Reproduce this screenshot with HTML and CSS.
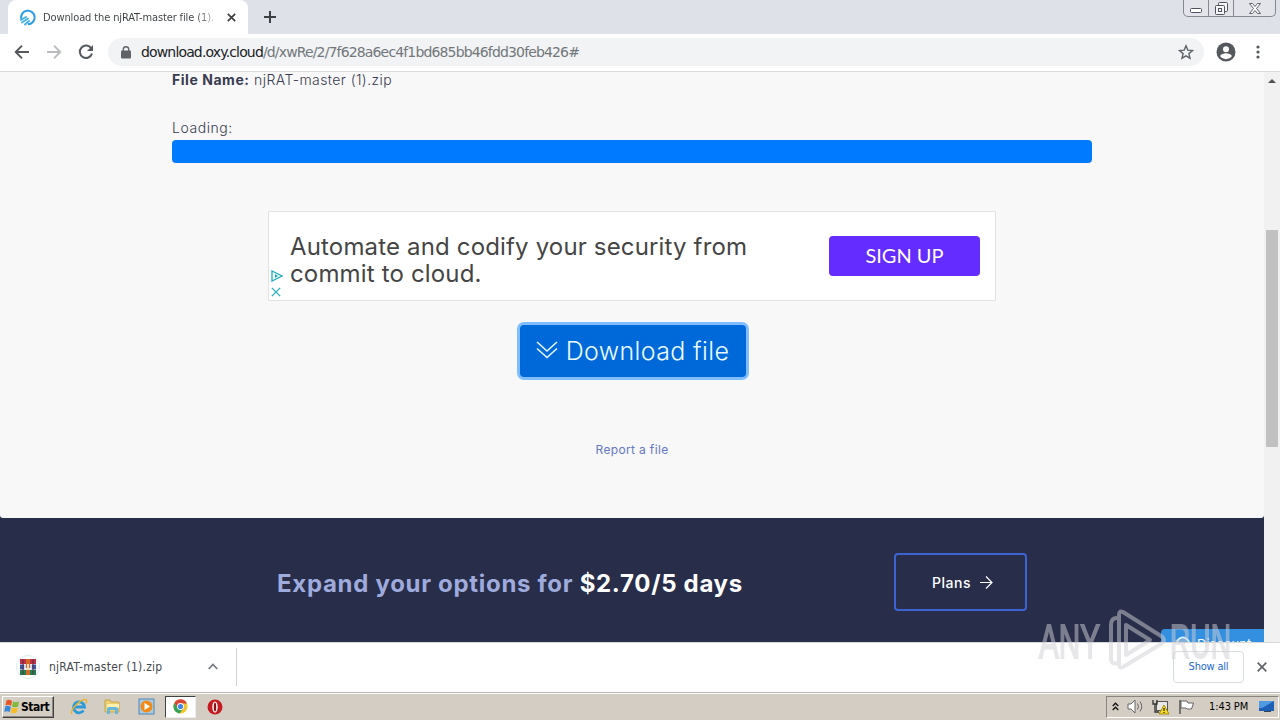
FILE: index.html
```html
<!DOCTYPE html>
<html lang="en">
<head>
  <meta charset="utf-8">
  <title>Download the njRAT-master file (1).zip</title>
  <link rel="stylesheet" href="styles.css">
</head>
<body>
  <div class="tab-strip">
    <div class="tab">
      <svg class="favicon" width="17" height="17" viewBox="0 0 17 17" fill="none">
        <path d="M2.200 10A6.800 6.800 0 1 1 9 15.300" stroke="#2f9de8" stroke-width="2"/>
        <path d="M2 11l5-3M3 13.500l6-4M6 15.500l4-3.500" stroke="#45b4ee" stroke-width="2" stroke-linecap="round"/>
      </svg>
      <span class="tab-title">Download the njRAT-master file (1).</span>
      <svg class="tab-close" width="9" height="9" viewBox="0 0 9 9"><path d="M.8.8l7.400 7.400M8.200.8L.8 8.200" stroke="#3c4043" stroke-width="1.700"/></svg>
    </div>
    <svg class="new-tab" width="12" height="12" viewBox="0 0 12 12"><path d="M6 0v12M0 6h12" stroke="#3c4043" stroke-width="2"/></svg>
    <div class="window-buttons">
      <span class="win-btn"><svg width="13" height="6" viewBox="0 0 13 6"><rect x=".5" y=".5" width="11" height="4" rx="1" fill="#fff" stroke="#51535c"/></svg></span>
      <span class="win-btn"><svg width="13" height="13" viewBox="0 0 13 13" fill="#f5f5f7" stroke="#51535c"><rect x="3.500" y=".5" width="9" height="9" rx="1"/><rect x=".5" y="3.500" width="9" height="9" rx="1"/><rect x="3.500" y="6.500" width="3" height="3"/></svg></span>
      <span class="win-btn wide"><svg width="12" height="11" viewBox="0 0 12 11"><path d="M.5.5h3L6 3.500 8.500.5h3l-4 5 4 5h-3L6 7.500 3.500 10.500h-3l4-5z" fill="#fff" stroke="#60626a"/></svg></span>
    </div>
  </div>

  <div class="toolbar">
    <svg class="nav-icon" width="16" height="16" viewBox="0 0 16 16"><path d="M15 8H2M8 1.700L1.700 8 8 14.300" fill="none" stroke="#55585c" stroke-width="1.900"/></svg>
    <svg class="nav-icon" width="16" height="16" viewBox="0 0 16 16"><path d="M1 8h13M8 1.700L14.300 8 8 14.300" fill="none" stroke="#b9bbbe" stroke-width="1.900"/></svg>
    <svg class="nav-icon" width="16" height="16" viewBox="0 0 16 16"><path d="M13.300 4.500A6.200 6.200 0 1 0 14 9.500" fill="none" stroke="#55585c" stroke-width="2"/><path d="M15 1v6H9z" fill="#55585c"/></svg>
    <div class="address">
      <svg width="10" height="13" viewBox="0 0 10 13"><rect y="4.500" width="10" height="8" rx="1" fill="#5f6368"/><path d="M2.300 5V3.500a2.700 2.700 0 0 1 5.400 0V5" fill="none" stroke="#5f6368" stroke-width="1.400"/></svg>
      <span class="url"><b>download.oxy.cloud</b>/d/xwRe/2/7f628a6ec4f1bd685bb46fdd30feb426#</span>
      <svg class="star" width="16" height="16" viewBox="0 0 16 16"><path d="M8 1.800l1.800 4.300 4.700.4-3.600 3.100 1.100 4.600L8 11.800l-4 2.400 1.100-4.600-3.600-3.100 4.700-.4z" fill="none" stroke="#5f6368" stroke-width="1.400"/></svg>
    </div>
    <svg class="profile" width="20" height="20" viewBox="0 0 20 20"><circle cx="10" cy="10" r="9.500" fill="#55585d"/><circle cx="10" cy="7.300" r="3" fill="#fff"/><path d="M4 14c1.200-2 3.500-2.800 6-2.800s4.800.8 6 2.800a7.300 7.300 0 0 1-12 0z" fill="#fff"/></svg>
    <svg class="menu-dots" width="4" height="14" viewBox="0 0 4 14" fill="#55585c"><circle cx="2" cy="2" r="1.600"/><circle cx="2" cy="7" r="1.600"/><circle cx="2" cy="12" r="1.600"/></svg>
  </div>

  <div class="viewport">
    <div class="page">
      <main class="content">
        <p class="file-name"><b>File Name:</b> <span>njRAT-master (1).zip</span></p>
        <p class="loading">Loading:</p>
        <div class="progress"></div>

        <div class="ad">
          <div class="ad-marks">
            <svg width="12" height="12" viewBox="0 0 12 12"><path d="M1 1l10 5-10 5z" fill="none" stroke="#1aaebc" stroke-width="1.300"/><path d="M4 4v4l3-2z" fill="#1aaebc"/></svg>
            <svg width="10" height="10" viewBox="0 0 10 10"><path d="M.8.8l8.400 8.400M9.200.8L.8 9.200" stroke="#1aaebc" stroke-width="1.200"/></svg>
          </div>
          <div class="ad-text">Automate and codify your security from<br>commit to cloud.</div>
          <button class="ad-btn">SIGN UP</button>
        </div>

        <button class="download-btn">
          <svg width="22" height="18" viewBox="0 0 22 18"><path d="M1 1l10 9L21 1M1 7.500l10 9 10-9" fill="none" stroke="#e8fbff" stroke-width="1.500"/></svg>
          <span>Download file</span>
        </button>
        <a class="report" href="#">Report a file</a>
      </main>

      <section class="plans">
        <h2>Expand your options for <span>$2.70/5 days</span></h2>
        <a class="plans-btn" href="#">Plans
          <svg width="13" height="13" viewBox="0 0 13 13"><path d="M0 6.500h12M6 .5l6 6-6 6" fill="none" stroke="#fff" stroke-width="1.200"/></svg>
        </a>
        <div class="chat"><svg width="17" height="14" viewBox="0 0 17 14"><path d="M2 14V8a6 6 0 0 1 12-1v7M5 9h7" fill="none" stroke="#d9efff" stroke-width="2"/></svg><span>Discount</span></div>
      </section>
    </div>
    <div class="scrollbar">
      <svg width="8" height="4" viewBox="0 0 8 4"><path d="M0 4l4-4 4 4z" fill="#505050"/></svg>
      <div class="thumb"></div>
    </div>
  </div>

  <div class="downloads">
    <div class="download-item">
      <svg class="zip-icon" width="24" height="24" viewBox="0 0 24 24">
        <circle cx="12" cy="12" r="11.500" fill="#fff" stroke="#dce8ee"/>
        <path d="M4 4h16v5H4z" fill="#c12e46"/><path d="M4 9.500h16v5H4z" fill="#4056a5"/><path d="M4 15h16v5H4z" fill="#22804c"/>
        <path d="M7 4v16M17 4v16" stroke="#563043"/><path d="M10 4h4v16h-4z" fill="#d06a25"/>
        <path d="M9 9v5h6V9M12 9v4" fill="none" stroke="#fff" stroke-width="1.500"/>
      </svg>
      <span class="item-name">njRAT-master (1).zip</span>
      <svg width="10" height="7" viewBox="0 0 10 7"><path d="M.7 6L5 1.500 9.300 6" fill="none" stroke="#777a7e" stroke-width="1.700"/></svg>
    </div>
    <button class="show-all">Show all</button>
    <svg class="shelf-close" width="10" height="10" viewBox="0 0 10 10"><path d="M.7.7l8.600 8.600M9.300.7L.7 9.300" stroke="#5f6368" stroke-width="1.700"/></svg>
  </div>

  <div class="taskbar">
    <div class="start">
      <svg width="16" height="15" viewBox="0 0 16 15"><path d="M2.500 1.500Q5 0 8 2L7 7Q4.500 5 1.500 6.500z" fill="#e65325"/><path d="M9 2.500q3 1.500 6 0l-1 5q-3 1.500-6 0z" fill="#7eb83c"/><path d="M1.300 7.500Q4 6 6.800 8l-1 5Q3 11.500.3 13z" fill="#3689d8"/><path d="M7.800 8.500q3 1.500 6 0l-1 5q-3 1.500-6 0z" fill="#f7bd26"/></svg>
      <span>Start</span>
    </div>
    <div class="quick">
      <span class="task"><svg width="18" height="18" viewBox="0 0 18 18" fill="none"><path d="M13.500 12.500A5.500 5.500 0 1 1 14.500 9H5" stroke="#2c9ad9" stroke-width="2.800"/><path d="M2 16C-1 13 10 1 15.500 1.500c2 .3 1 3 .2 4" stroke="#e8b52d" stroke-width="1.400"/></svg></span>
      <span class="task"><svg width="17" height="17" viewBox="0 0 17 17"><path d="M1 2h5l1 2h8v10H1z" fill="#edcf71" stroke="#c7a54c"/><path d="M3 6h12v4H3z" fill="#fff0b0"/><path d="M3 16v-5q0-2 2-2h7q2 0 2 2v5h-3v-4H6v4z" fill="#69b6dc"/></svg></span>
      <span class="task"><svg width="17" height="17" viewBox="0 0 17 17"><rect x="1" y="1" width="15" height="15" fill="#a8cbe4" stroke="#4e86b4"/><circle cx="8.500" cy="8.500" r="6" fill="#f28a18"/><path d="M6.500 5l5.500 3.500L6.500 12z" fill="#fff"/></svg></span>
      <span class="task active"><svg width="15" height="15" viewBox="0 0 15 15"><circle cx="7.500" cy="7.500" r="7" fill="#f3c52c"/><path d="M1.400 4A7 7 0 0 1 14 4.500H7.500L4.500 9z" fill="#db4437"/><path d="M1.400 4a7 7 0 0 0 5.300 10.500L10 9.500l-5 0z" fill="#35a257"/><circle cx="7.500" cy="7.500" r="3.400" fill="#fff"/><circle cx="7.500" cy="7.500" r="2.600" fill="#4285e8"/></svg></span>
      <span class="task"><svg width="16" height="16" viewBox="0 0 16 16"><circle cx="8" cy="8" r="7.500" fill="#c51b20"/><ellipse cx="8" cy="8" rx="2.700" ry="5.600" fill="#fff"/><ellipse cx="8" cy="8" rx="1.200" ry="4.600" fill="#8b1115"/></svg></span>
    </div>
    <div class="tray">
      <svg width="7" height="9" viewBox="0 0 7 9"><path d="M.7 4l2.800-2.800L6.300 4M.7 8l2.800-2.800L6.300 8" fill="none" stroke="#111" stroke-width="1.300"/></svg>
      <svg width="17" height="15" viewBox="0 0 17 15" stroke="#666"><path d="M1 5h3l4-4v13l-4-4H1z" fill="#fff"/><path d="M10.500 4.500q2 3 0 6M13 2.500q3.500 5 0 10" fill="none"/></svg>
      <svg width="18" height="16" viewBox="0 0 18 16"><rect x="4.500" y="2.500" width="11" height="9" fill="#e8e9e5" stroke="#555"/><path d="M1 1v4h4V1M3 5v8h4" fill="none" stroke="#333" stroke-width="1.300"/><path d="M12 6l5 9H7z" fill="#f8dc22" stroke="#a38c12"/><path d="M12 9v3M12 13v1" stroke="#222" stroke-width="1.200"/></svg>
      <svg width="17" height="16" viewBox="0 0 17 16"><path d="M2 1v14" stroke="#555" stroke-width="1.500"/><path d="M3 2h6l1 2h5.500l-2 6H9L8 9H3z" fill="#fff" stroke="#666"/></svg>
      <span class="clock">1:43 PM</span>
      <svg width="15" height="13" viewBox="0 0 15 13"><path d="M0 1h15v10H0z" fill="#1f5fb5"/><path d="M0 1h15L3 8H0z" fill="#4f9ae0"/><path d="M5 11h7v1H5z" fill="#345"/></svg>
    </div>
  </div>

  <svg class="watermark" width="200" height="66" viewBox="0 0 200 66">
    <text x="3" y="51" textLength="61" lengthAdjust="spacingAndGlyphs">ANY</text>
    <g fill="none" stroke-width="4" stroke-linejoin="round">
      <path d="M81 11q-6 0-6 7v33q0 7 7 5"/>
      <path d="M87 5l38 24q6 4 0 8L87 60q-4 2-4-3V8q0-5 4-3z"/>
      <path d="M90 18l24 15-24 15z"/>
    </g>
    <text x="134" y="51" textLength="61" lengthAdjust="spacingAndGlyphs">RUN</text>
  </svg>
</body>
</html>
```
FILE: styles.css
```css
* {
  box-sizing: border-box;
}

body {
  margin: 0;
  width: 1280px;
  height: 720px;
  overflow: hidden;
  position: relative;
  display: flex;
  flex-direction: column;
  font-family: "DejaVu Sans Condensed", "DejaVu Sans", sans-serif;
  font-size: 11px;
}

svg {
  display: block;
  flex-shrink: 0;
}

button {
  border: none;
  padding: 0;
  font-family: inherit;
}

/* browser chrome */
.tab-strip {
  height: 34px;
  flex-shrink: 0;
  background: #dee1e8;
  display: flex;
  padding-left: 8px;
}

.tab {
  width: 240px;
  background: white;
  border-radius: 8px 8px 0 0;
  display: flex;
  align-items: center;
  padding: 0 11px;
}

.tab-title {
  width: 173px;
  margin: 0 11px 0 7px;
  white-space: nowrap;
  letter-spacing: -0.12px;
  background: linear-gradient(90deg, #3c4043 88%, #d0d0d0 100%);
  -webkit-background-clip: text;
  -webkit-text-fill-color: transparent;
}

.new-tab {
  margin: 11px 0 0 16px;
}

.window-buttons {
  margin: 0 4px 0 auto;
  height: 17px;
  display: flex;
  border: 1px solid #858891;
  border-top: none;
  border-radius: 0 0 5px 5px;
  background: #e2e4e9;
}

.win-btn {
  width: 25px;
  display: flex;
  justify-content: center;
  align-items: center;
  border-right: 1px solid #858891;
}

.win-btn:first-child {
  align-items: flex-end;
  padding-bottom: 2px;
}

.win-btn.wide {
  width: 41px;
  border-right: none;
}

.toolbar {
  height: 38px;
  flex-shrink: 0;
  background: white;
  border-bottom: 1px solid #d9dbdc;
  display: flex;
  align-items: center;
  padding: 0 20px 1px 14px;
}

.nav-icon {
  margin-right: 16px;
}

.address {
  width: 1096px;
  height: 28px;
  margin-left: -2px;
  background: #f1f3f4;
  border-radius: 14px;
  display: flex;
  align-items: center;
  padding: 0 10px 0 13px;
}

.url {
  margin-left: 10px;
  font-family: "DejaVu Sans", sans-serif;
  font-size: 14px;
  letter-spacing: -0.85px;
  color: #72777b;
}

.url b {
  font-weight: 400;
  color: #202124;
}

.star {
  margin-left: auto;
}

.profile {
  margin-left: 12px;
}

.menu-dots {
  margin-left: auto;
}

/* web page */
.viewport {
  height: 570px;
  flex-shrink: 0;
  display: flex;
  overflow: hidden;
}

.page {
  width: 1264px;
  background: #282e4a;
  font-family: Inter, sans-serif;
  color: #393c50;
}

.content {
  height: 446px;
  background: #f8f8f8;
  display: flex;
  flex-direction: column;
  align-items: center;
  border-radius: 0 0 3px 3px;
}

.file-name, .loading {
  width: 920px;
  margin: 0;
  font-size: 14px;
  line-height: 17px;
}

.file-name {
  margin-top: -1px;
  letter-spacing: 0.55px;
}

.file-name span {
  font-weight: 300;
  letter-spacing: 0.42px;
}

.loading {
  margin-top: 31px;
  font-weight: 300;
  letter-spacing: 0.55px;
}

.progress {
  width: 920px;
  height: 23px;
  margin-top: 4px;
  border-radius: 4px;
  background: #007bff;
}

.ad {
  width: 728px;
  height: 90px;
  margin-top: 48px;
  background: white;
  border: 1px solid #e2e2e2;
  display: flex;
  align-items: center;
  padding-right: 15px;
}

.ad-marks {
  width: 21px;
  align-self: flex-end;
  display: flex;
  flex-direction: column;
  align-items: flex-start;
  gap: 5px;
  padding: 0 0 3px 2px;
}

.ad-text {
  font-size: 24px;
  line-height: 27px;
  margin-top: 8px;
  white-space: nowrap;
  letter-spacing: 0.16px;
  color: #454545;
}

.ad-btn {
  width: 151px;
  height: 40px;
  margin-left: auto;
  padding-bottom: 3px;
  border-radius: 4px;
  background: #652cff;
  color: white;
  font-family: Lato, sans-serif;
  font-size: 20px;
}

.download-btn {
  width: 226px;
  height: 52px;
  margin: 24px 0 0 1px;
  border-radius: 4px;
  background: #0069d9;
  box-shadow: 0 0 0 3px #80bdff;
  color: #e8fbff;
  font-size: 25px;
  font-weight: 300;
  letter-spacing: 0.35px;
  display: flex;
  justify-content: center;
  align-items: center;
  gap: 8px;
  white-space: nowrap;
}

.download-btn svg {
  margin-bottom: 3px;
}

.report {
  margin-top: 65px;
  font-size: 12px;
  line-height: 16px;
  letter-spacing: 0.35px;
  color: #6677c4;
  text-decoration: none;
}

.plans {
  height: 124px;
  position: relative;
  display: flex;
  padding: 35px 237px 0 277px;
  justify-content: space-between;
}

.plans h2 {
  margin: 14px 0 0;
  font-size: 24px;
  line-height: 34px;
  font-weight: 700;
  letter-spacing: 0.7px;
  color: #9fabdd;
  white-space: nowrap;
}

.plans h2 span {
  color: white;
}

.plans-btn {
  width: 133px;
  height: 58px;
  border: 2px solid #3d62d2;
  border-radius: 4px;
  color: white;
  text-decoration: none;
  font-size: 14px;
  font-weight: 500;
  letter-spacing: 0.5px;
  display: flex;
  align-items: center;
  justify-content: center;
  gap: 9px;
  padding-left: 4px;
}

.chat {
  position: absolute;
  right: 0;
  bottom: 0;
  width: 103px;
  height: 13px;
  overflow: hidden;
  background: #338fdf;
  border-radius: 4px 0 0 0;
  display: flex;
  align-items: flex-start;
  gap: 5px;
  padding: 7px 0 0 14px;
  color: white;
  font-size: 13px;
}

.scrollbar {
  width: 16px;
  background: #f1f1f1;
  display: flex;
  flex-direction: column;
  align-items: center;
  padding-top: 7px;
}

.thumb {
  width: 12px;
  height: 217px;
  margin-top: 147px;
  background: #c1c1c1;
}

/* download shelf */
.downloads {
  height: 50px;
  flex-shrink: 0;
  background: white;
  border-top: 1px solid #d5d7d9;
  display: flex;
  align-items: center;
  padding: 0 13px 2px 0;
}

.download-item {
  width: 237px;
  height: 38px;
  border-right: 1px solid #d0d2d4;
  display: flex;
  align-items: center;
  padding: 0 18px 0 16px;
}

.item-name {
  margin: 0 auto 0 9px;
  font-size: 12px;
  letter-spacing: 0.25px;
  color: #45494d;
}

.show-all {
  width: 71px;
  height: 32px;
  margin-left: auto;
  border: 1px solid #d9dce0;
  border-radius: 4px;
  background: white;
  color: #2368c9;
  font-size: 11px;
  letter-spacing: -0.2px;
}

.shelf-close {
  margin-left: 13px;
}

/* windows taskbar */
.taskbar {
  height: 28px;
  flex-shrink: 0;
  background: #d4cdc4;
  border-top: 1px solid #bcb8b2;
  box-shadow: inset 0 1px white;
  display: flex;
  align-items: center;
}

.start {
  width: 52px;
  height: 22px;
  margin-left: 2px;
  display: flex;
  align-items: center;
  gap: 1px;
  padding-left: 1px;
  font-size: 12px;
  font-weight: 700;
  letter-spacing: -0.5px;
  border: 1px solid;
  border-color: white #404040 #404040 white;
  box-shadow: inset -1px -1px #8c8882;
}

.quick {
  display: flex;
  margin-left: 9px;
}

.task {
  width: 31px;
  height: 22px;
  margin-right: 3px;
  display: flex;
  align-items: center;
  justify-content: center;
}

.task.active {
  background: white;
  border: 1px solid;
  border-color: #404040 #eee #eee #404040;
}

.tray {
  width: 173px;
  height: 22px;
  margin: 0 1px 0 auto;
  display: flex;
  align-items: center;
  gap: 8px;
  padding-left: 5px;
  border: 1px solid;
  border-color: #88847e white white #88847e;
}

.clock {
  width: 40px;
  margin: 0 2px 0 6px;
  white-space: nowrap;
  letter-spacing: -0.1px;
}

.watermark {
  position: absolute;
  left: 1036px;
  top: 607px;
  opacity: 0.5;
  fill: #d0d0d5;
  stroke: #d0d0d5;
  stroke-width: 2;
  font-family: "Liberation Sans", sans-serif;
  font-size: 49px;
}
```
